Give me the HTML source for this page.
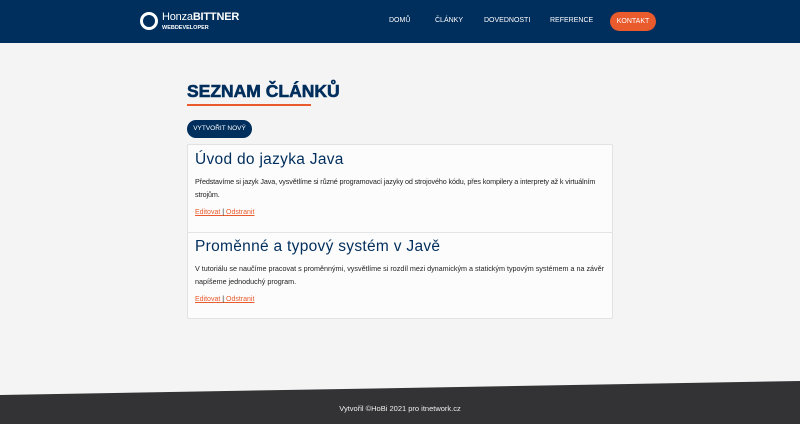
<!DOCTYPE html>
<html><head><meta charset="utf-8"><style>
*{margin:0;padding:0;box-sizing:border-box}
body{width:800px;height:424px;overflow:hidden;background:#f4f4f4;font-family:"Liberation Sans",sans-serif;position:relative}
.hdr{position:absolute;left:0;top:0;width:800px;height:43px;background:#002e5d}
.logo{position:absolute;left:140px;top:12px;width:18px;height:18px;border:3px solid #fff;border-radius:50%}
.lt{position:absolute;left:162px;top:11px;color:#fff;font-size:11px;letter-spacing:-0.2px}
.lt b{font-weight:bold}
.ls{position:absolute;left:162px;top:25px;color:#fff;font-size:5.5px;font-weight:bold}
.nav{position:absolute;top:17px;color:#fff;font-size:7px}
.kont{position:absolute;left:610px;top:12px;width:46px;height:19px;border-radius:10px;background:#e95a2c;color:#fff;font-size:7px;text-align:center;line-height:19px}
h1{position:absolute;left:187px;top:81px;font-size:17.5px;font-weight:900;color:#002e5d;letter-spacing:0px;-webkit-text-stroke:0.6px #002e5d}
.ul{position:absolute;left:187px;top:104px;width:124px;height:2px;background:#e95a2c}
.btn{position:absolute;left:187px;top:120px;width:65px;height:18px;border-radius:9px;background:#002e5d;color:#fff;font-size:6.5px;text-align:center;line-height:18px}
.card{position:absolute;left:187px;top:144px;width:426px;height:175px;background:#fcfcfc;border:1px solid #e2e2e2;border-radius:2px}
.sep{position:absolute;left:0;top:87px;width:100%;height:1px;background:#e4e4e4}
.t{position:absolute;left:7px;font-size:15.5px;color:#002e5d;letter-spacing:0.3px}
.p{position:absolute;left:7px;white-space:nowrap;font-size:7.2px;line-height:12.5px;color:#222}
.a{position:absolute;left:7px;font-size:7px;color:#e95a2c;text-decoration:underline}
.a span{color:#222;text-decoration:none}
.foot{position:absolute;left:0;top:0;width:800px;height:424px}
.ft{position:absolute;top:404px;width:800px;text-align:center;color:#eee;font-size:7.5px}
</style></head><body>
<div class="hdr">
<div class="logo"></div>
<div class="lt">Honza<b>BITTNER</b></div>
<div class="ls">WEBDEVELOPER</div>
<div class="nav" style="left:389px">DOMŮ</div>
<div class="nav" style="left:435px">ČLÁNKY</div>
<div class="nav" style="left:484px">DOVEDNOSTI</div>
<div class="nav" style="left:550px">REFERENCE</div>
<div class="kont">KONTAKT</div>
</div>
<h1>SEZNAM ČLÁNKŮ</h1>
<div class="ul"></div>
<div class="btn">VYTVOŘIT NOVÝ</div>
<div class="card">
<div class="t" style="top:6px">Úvod do jazyka Java</div>
<div class="p" style="top:31px;letter-spacing:-0.12px">Představíme si jazyk Java, vysvětlíme si různé programovací jazyky od strojového kódu, přes kompilery a interprety až k virtuálním<br>strojům.</div>
<div class="a" style="top:64px">Editovat <span>|</span> Odstranit</div>
<div class="sep"></div>
<div class="t" style="top:93px">Proměnné a typový systém v Javě</div>
<div class="p" style="top:118px">V tutoriálu se naučíme pracovat s proměnnými, vysvětlíme si rozdíl mezi dynamickým a statickým typovým systémem a na závěr<br>napíšeme jednoduchý program.</div>
<div class="a" style="top:151px">Editovat <span>|</span> Odstranit</div>
</div>
<svg class="foot" width="800" height="424"><polygon points="0,395 800,381 800,424 0,424" fill="#333335"/></svg>
<div class="ft">Vytvořil ©HoBi 2021 pro itnetwork.cz</div>
</body></html>
